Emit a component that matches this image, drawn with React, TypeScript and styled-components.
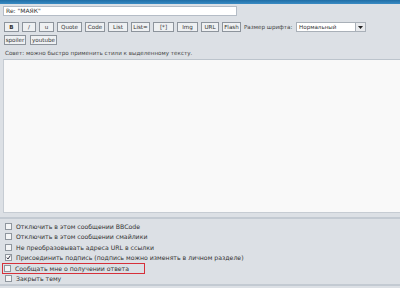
import React from 'react';
import styled, {createGlobalStyle} from 'styled-components';

const GlobalStyle = createGlobalStyle`
  html, body {
    margin: 0;
    padding: 0;
    background: #dce0e5;
    overflow: hidden;
  }
  body {
    font-family: "DejaVu Sans", Verdana, sans-serif;
    color: #333;
  }
`;

const Page = styled.div`
  width: 400px;
  height: 288px;
  background: #dce0e5;
  overflow: hidden;
  display: flex;
  flex-direction: column;
`;

const TopBar = styled.div`
  height: 4px;
  background: linear-gradient(#1f6ea6, #3a8cc4);
  flex-shrink: 0;
`;

const Body = styled.div`
  padding: 2px 0 0 3px;
  display: flex;
  flex-direction: column;
`;

const SubjectInput = styled.div`
  width: 228px;
  height: 8px;
  padding: 0 2px;
  background: #fff;
  border: 1px solid #b4bcc6;
  font-size: 6px;
  line-height: 8px;
  color: #333;
  white-space: nowrap;
`;

const Toolbar = styled.div<{$gap?: number}>`
  display: flex;
  align-items: center;
  gap: ${p => p.$gap ?? 3}px;
  margin-top: 6px;
  padding-left: 1px;
`;

const ToolRow = styled(Toolbar)`
  margin-top: 3px;
`;

const Btn = styled.div<{$w: number; $bold?: boolean}>`
  height: 10px;
  width: ${p => p.$w}px;
  border: 1px solid #8d949c;
  background: #eef0f2;
  font-size: 5.6px;
  line-height: 8px;
  font-weight: ${p => (p.$bold ? 'bold' : 'normal')};
  text-align: center;
  color: #333;
  white-space: nowrap;
  box-sizing: border-box;
  flex-shrink: 0;
`;

const Label = styled.span`
  width: 49px;
  font-size: 5.6px;
  color: #444;
  white-space: nowrap;
`;

const Select = styled.div`
  display: flex;
  align-items: stretch;
  width: 70px;
  height: 10px;
  border: 1px solid #a9b0b8;
  background: #fff;
  box-sizing: border-box;
`;

const SelectText = styled.span`
  flex: 1;
  font-size: 5.6px;
  line-height: 8px;
  padding-left: 2px;
  color: #333;
`;

const SelectArrow = styled.span`
  width: 9px;
  border-left: 1px solid #a9b0b8;
  background: #e8eaed;
  display: flex;
  align-items: center;
  justify-content: center;
`;

const Tip = styled.div`
  font-size: 5.6px;
  color: #444;
  margin: 4px 0 0 2px;
  height: 8px;
  line-height: 8px;
  white-space: nowrap;
`;

const TextArea = styled.div`
  margin-top: 2px;
  height: 152px;
  width: 420px;
  background: #f9f9f9;
  border: 1px solid #c6ccd3;
  border-top-color: #bcc4cc;
`;

const Separator = styled.div`
  height: 2px;
  background: #c3cad2;
  margin-top: 4px;
`;

const Options = styled.div`
  display: flex;
  flex-direction: column;
  padding: 2px 0 0 3px;
  height: 63px;
`;

const OptionRow = styled.div<{$highlight?: boolean}>`
  display: flex;
  align-items: center;
  height: 11px;
  width: ${p => (p.$highlight ? '143px' : 'auto')};
  margin-left: ${p => (p.$highlight ? '-1px' : '0')};
  border: 1px solid ${p => (p.$highlight ? '#d6303a' : 'transparent')};
  box-sizing: border-box;
`;

const Box = styled.span`
  width: 5px;
  height: 5px;
  border: 1px solid #8f969e;
  background: #f4f5f6;
  margin-left: 1px;
  margin-right: 4px;
  display: flex;
  align-items: center;
  justify-content: center;
  flex-shrink: 0;
`;

const OptionText = styled.span`
  font-size: 6.2px;
  color: #333;
  white-space: nowrap;
`;

const BottomLine = styled.div`
  height: 2px;
  background: #c3cad2;
`;

const buttons = [
  {label: 'B', w: 15, bold: true},
  {label: '/', w: 14},
  {label: 'u', w: 15},
  {label: 'Quote', w: 25},
  {label: 'Code', w: 20},
  {label: 'List', w: 20},
  {label: 'List=', w: 19},
  {label: '[*]', w: 21},
  {label: 'Img', w: 21},
  {label: 'URL', w: 18},
  {label: 'Flash', w: 19}
];

const options = [
  {text: 'Отключить в этом сообщении BBCode'},
  {text: 'Отключить в этом сообщении смайлики'},
  {text: 'Не преобразовывать адреса URL в ссылки'},
  {text: 'Присоединить подпись (подпись можно изменять в личном разделе)', checked: true},
  {text: 'Сообщать мне о получении ответа', highlight: true},
  {text: 'Закрыть тему'}
];

const App = () => (
  <Page>
    <GlobalStyle />
    <TopBar />
    <Body>
      <SubjectInput>Re: "МАЯК"</SubjectInput>
      <Toolbar>
        {buttons.map(b => (
          <Btn key={b.label} $w={b.w} $bold={b.bold}>
            {b.label}
          </Btn>
        ))}
        <Label>Размер шрифта:</Label>
        <Select>
          <SelectText>Нормальный</SelectText>
          <SelectArrow>
            <svg width="5" height="3" viewBox="0 0 5 3">
              <path d="M0 0 H5 L2.5 3 Z" fill="#222" />
            </svg>
          </SelectArrow>
        </Select>
      </Toolbar>
      <ToolRow $gap={4}>
        <Btn $w={22}>spoiler</Btn>
        <Btn $w={27}>youtube</Btn>
      </ToolRow>
      <Tip>Совет: можно быстро применить стили к выделенному тексту.</Tip>
      <TextArea />
    </Body>
    <Separator />
    <Options>
      {options.map(o => (
        <OptionRow key={o.text} $highlight={o.highlight}>
          <Box>
            {o.checked && (
              <svg width="5" height="5" viewBox="0 0 5 5">
                <path d="M0.8 2.6 L2 4 L4.3 0.6" stroke="#223" strokeWidth="0.9" fill="none" />
              </svg>
            )}
          </Box>
          <OptionText>{o.text}</OptionText>
        </OptionRow>
      ))}
    </Options>
    <BottomLine />
  </Page>
);

export default App;
